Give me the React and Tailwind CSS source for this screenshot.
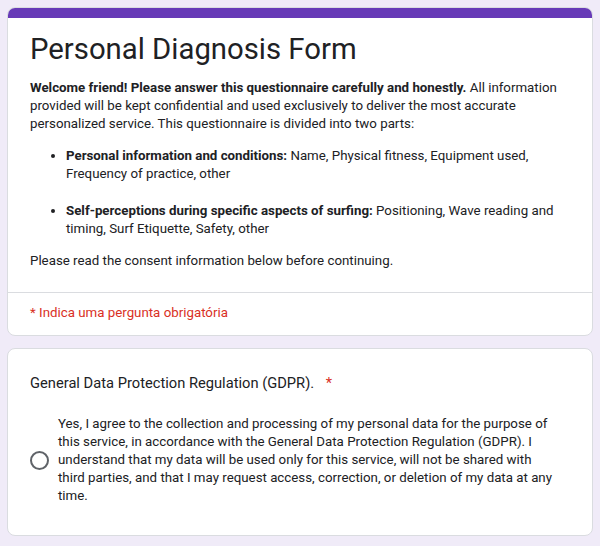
import React from "react";

export default function App() {
    return (
        <div className="min-h-[546px] bg-[#f0ebf8] px-[7px] pt-[7px] pb-3 font-['Roboto',sans-serif] text-[#202124]">
            <div className="rounded-lg bg-white border border-[#dadce0] overflow-hidden">
                <div className="h-[10px] bg-[#673ab7]"></div>
                <div className="px-[22px] pt-[11px] pb-[22px]">
                    <h1 className="text-[29.3px] leading-[40px] font-normal">
                        Personal Diagnosis Form
                    </h1>
                    <div className="mt-[10px] text-[13.3px] leading-[18px]">
                        <p>
                            <span className="font-bold">
                                Welcome friend! Please answer this questionnaire carefully and honestly.
                            </span>{" "}
                            All information provided will be kept confidential and used exclusively to deliver the most accurate personalized service. This questionnaire is divided into two parts:
                        </p>
                        <ul className="list-disc pl-[36px] mt-[14px] flex flex-col gap-[19px]">
                            <li>
                                <span className="font-bold">Personal information and conditions:</span>{" "}
                                Name, Physical fitness, Equipment used, Frequency of practice, other
                            </li>
                            <li>
                                <span className="font-bold">Self-perceptions during specific aspects of surfing:</span>{" "}
                                Positioning, Wave reading and timing, Surf Etiquette, Safety, other
                            </li>
                        </ul>
                        <p className="mt-[14px]">
                            Please read the consent information below before continuing.
                        </p>
                    </div>
                </div>
                <div className="border-t border-[#dadce0] px-[22px] pt-[11px] pb-[13px] text-[13.3px] leading-[18px] text-[#d93025]">
                    * Indica uma pergunta obrigatória
                </div>
            </div>

            <div className="mt-[12px] rounded-lg bg-white border border-[#dadce0] px-[22px] pt-[24px] pb-[30px]">
                <div className="text-[14.7px] leading-[20px]">
                    General Data Protection Regulation (GDPR).{" "}
                    <span className="text-[#d93025] ml-2">*</span>
                </div>
                <div className="mt-[22px] flex items-center gap-[9px]">
                    <div className="w-[19px] h-[19px] shrink-0 rounded-full border-2 border-[#5f6368]"></div>
                    <p className="text-[13.3px] leading-[18px] pr-[10px]">
                        Yes, I agree to the collection and processing of my personal data for the purpose of this service, in accordance with the General Data Protection Regulation (GDPR). I understand that my data will be used only for this service, will not be shared with third parties, and that I may request access, correction, or deletion of my data at any time.
                    </p>
                </div>
            </div>
        </div>
    );
}
